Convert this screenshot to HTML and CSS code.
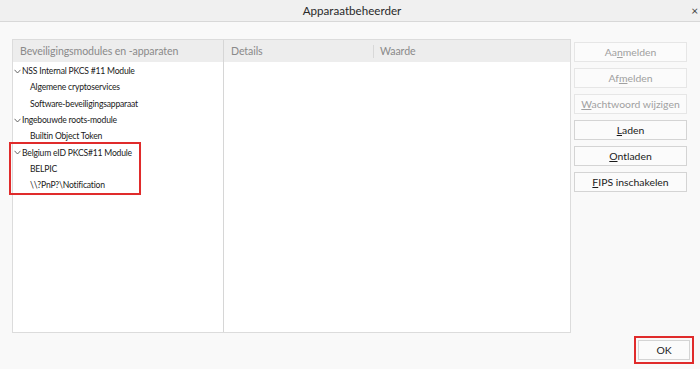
FILE: index.html
```html
<!DOCTYPE html>
<html lang="nl">
<head>
<meta charset="UTF-8" />
<title>Apparaatbeheerder</title>
<link rel="stylesheet" href="styles.css">
</head>
<body>
  <div class="titlebar">
    <span class="title">Apparaatbeheerder</span>
    <span class="close">×</span>
  </div>

  <div class="main">
    <div class="panel">
      <div class="col tree-col">
        <div class="head">Beveiligingsmodules en -apparaten</div>
        <div class="tree">
          <div class="row mod"><svg class="chev" viewBox="0 0 7 5"><polyline points="0.5,0.8 3.5,4 6.5,0.8" /></svg>NSS Internal PKCS #11 Module</div>
          <div class="row dev">Algemene cryptoservices</div>
          <div class="row dev">Software-beveiligingsapparaat</div>
          <div class="row mod"><svg class="chev" viewBox="0 0 7 5"><polyline points="0.5,0.8 3.5,4 6.5,0.8" /></svg>Ingebouwde roots-module</div>
          <div class="row dev">Builtin Object Token</div>
          <div class="hl">
            <div class="row mod"><svg class="chev" viewBox="0 0 7 5"><polyline points="0.5,0.8 3.5,4 6.5,0.8" /></svg>Belgium eID PKCS#11 Module</div>
            <div class="row dev">BELPIC</div>
            <div class="row dev">\\?PnP?\Notification</div>
          </div>
        </div>
      </div>
      <div class="col detail-col">
        <div class="head split">
          <span class="h-details">Details</span>
          <span class="h-value">Waarde</span>
        </div>
      </div>
    </div>

    <div class="buttons">
      <button class="btn" disabled>Aa<u>n</u>melden</button>
      <button class="btn" disabled>Af<u>m</u>elden</button>
      <button class="btn" disabled><u>W</u>achtwoord wijzigen</button>
      <button class="btn"><u>L</u>aden</button>
      <button class="btn"><u>O</u>ntladen</button>
      <button class="btn"><u>F</u>IPS inschakelen</button>
    </div>
  </div>

  <div class="footer">
    <button class="btn ok">OK</button>
  </div>
</body>
</html>
```

FILE: styles.css
```css
* {
  margin: 0;
  padding: 0;
  box-sizing: border-box;
}

html, body {
  height: 100%;
  overflow: hidden;
}

body {
  font-family: Lato, 'Open Sans', sans-serif;
  background: #f9f9f9;
  color: #1a1a1a;
  font-size: 8.6px;
  letter-spacing: -0.2px;
}

.titlebar {
  height: 22px;
  background: #f0f0f0;
  border-bottom: 1px solid #d8d8d8;
  display: flex;
  align-items: center;
  justify-content: center;
  position: relative;
}

.title {
  font-size: 11.6px;
  color: #2a2a2a;
  letter-spacing: 0;
  padding-left: 4px;
}

.close {
  position: absolute;
  right: 2px;
  top: 3px;
  font-size: 12px;
  color: #444;
}

.main {
  display: flex;
  padding: 17px 0 0 12px;
  gap: 3px;
}

.panel {
  width: 559px;
  height: 294px;
  background: #fff;
  border: 1px solid #dcdcdc;
  display: flex;
}

.col {
  display: flex;
  flex-direction: column;
}

.tree-col {
  width: 211px;
  border-right: 1px solid #d6d6d6;
}

.detail-col {
  flex: 1;
}

.head {
  height: 22px;
  background: #ededed;
  color: #8a8a8a;
  font-size: 10.6px;
  letter-spacing: -0.1px;
  display: flex;
  align-items: center;
  padding-left: 7px;
}

.h-details {
  width: 143px;
  border-right: 1px solid #d8d8d8;
  height: 13px;
  line-height: 13px;
}

.h-value {
  padding-left: 6px;
}

.tree {
  padding-top: 1px;
}

.row {
  height: 16.3px;
  display: flex;
  align-items: center;
  white-space: nowrap;
}

.mod {
  padding-left: 1px;
}

.chev {
  flex-shrink: 0;
  width: 7px;
  height: 5px;
  margin-right: 1px;
  fill: none;
  stroke: #555;
  stroke-width: 0.9;
}

.dev {
  padding-left: 17px;
}

.hl {
  width: 128px;
  margin-left: -2px;
  padding-left: 2px;
  outline: 2px solid #e02b2b;
  box-shadow: 1px 1px 2px rgba(0, 0, 0, 0.15);
}

.buttons {
  display: flex;
  flex-direction: column;
  gap: 6px;
  padding-top: 3px;
}

.btn {
  width: 113px;
  height: 20px;
  font-family: inherit;
  font-size: 10.4px;
  letter-spacing: 0;
  color: #1a1a1a;
  background: #fbfbfb;
  border: 1px solid #d4d4d4;
}

.btn:disabled {
  color: #a0a0a0;
  border-color: #e6e6e6;
}

.footer {
  display: flex;
  justify-content: flex-end;
  padding: 7px 10px 0 0;
}

.ok {
  width: 52px;
  height: 20px;
  outline: 2px solid #e02b2b;
  outline-offset: 2px;
}
```
